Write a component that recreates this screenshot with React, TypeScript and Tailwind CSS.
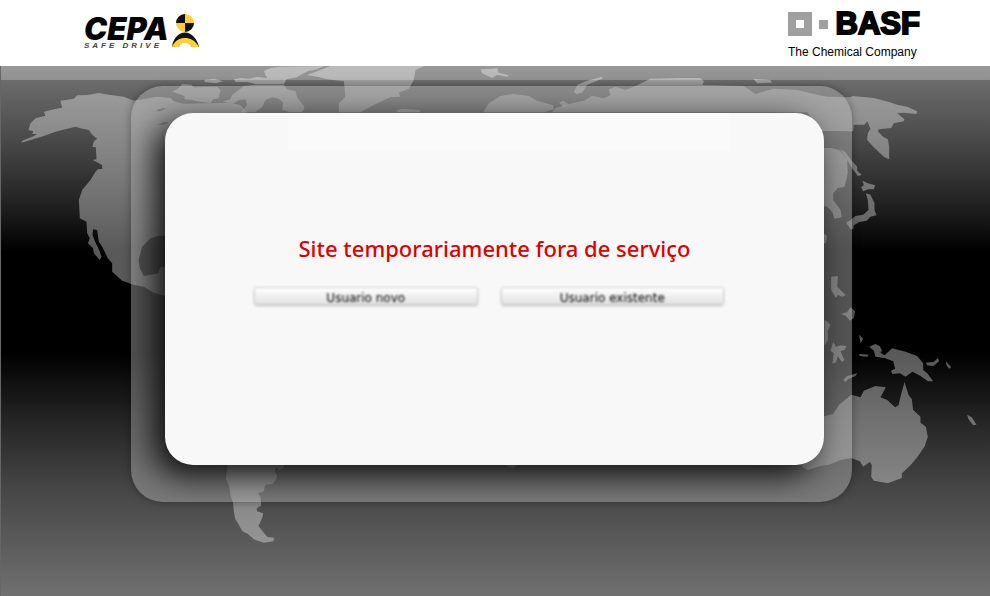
function WorldMap() {
  return (
    <svg
      className="absolute inset-0 h-full w-full"
      viewBox="0 66 990 530"
      preserveAspectRatio="xMidYMin slice"
      aria-hidden="true"
    >
      <g fill="#ffffff" fillOpacity="0.35">
        {/* North America */}
        <path
          transform="translate(0 60) scale(0.33333)"
          fillRule="evenodd"
          d="M62 248L66 242L100 228L110 222L95 222L98 214L84 210L90 190L105 175L135 167L130 155L160 148L185 143L180 122L220 116L230 106L260 105L295 99L330 105L370 110L400 122L430 117L470 110L510 114L520 124L550 131L630 130L690 128L720 135L740 157L740 400L495 620L480 620L474 640L430 648L418 625L414 600L425 560L450 535L475 527L540 527L540 720L495 708L460 698L430 680L400 675L365 662L335 635L335 610L322 595L305 560L295 545L290 510L278 508L276 525L284 545L296 570L303 590L298 600L280 580L278 565L262 550L268 535L260 520L258 485L238 475L235 420L245 390L270 360L285 335L292 328L306 326L304 314L284 304L276 300L288 298L286 262L276 260L280 244L290 236L276 225L265 210L240 205L225 200L185 210L165 215L130 228L90 240ZM465 153L485 144L497 146L478 154ZM472 195L490 186L505 187L490 194Z"
        />
        {/* Arctic islands */}
        <path
          transform="translate(0 60) scale(0.33333)"
          d="M515 95L535 84L545 72L572 74L580 82L650 80L660 90L655 115L638 118L630 130L590 124L575 120L552 118L552 108L530 100ZM612 60L640 56L668 64L645 70L612 66ZM665 125L690 118L695 104L715 90L730 78L770 74L850 74L860 88L885 94L890 112L912 140L905 154L862 154L850 130L835 116L815 112L795 120L785 140L765 157L720 157L740 135L735 118L715 120L700 130ZM700 58L720 54L745 56L770 50L800 55L790 34L810 24L840 20L970 18L950 28L925 32L905 42L890 52L858 58L850 72L765 72L740 66L705 66ZM920 45L960 30L990 18L1272 18L1245 30L1240 60L1225 86L1195 98L1200 110L1170 112L1130 130L1080 157L1015 157L1015 130L1035 110L1030 64L980 58L950 50ZM845 150L850 120L880 112L912 145L905 156L870 157Z"
        />
        <path
          transform="translate(320 60) scale(0.33333)"
          d="M225 152L245 146L298 150L300 157L235 157ZM480 28L515 26L530 24L535 38L565 46L560 50L530 44L515 54L485 40ZM490 152L505 130L540 108L580 102L625 108L650 122L698 136L700 148L670 157L490 157ZM760 96L770 75L800 62L845 50L845 56L800 74L785 98L768 102ZM716 128L728 122L744 132L730 142Z"
        />
        {/* Eurasia */}
        <path
          transform="translate(640 60) scale(0.33333)"
          d="M-265 157L-255 143L-200 128L-170 122L-145 108L-110 115L-90 106L-95 88L-75 80L-45 90L-10 76L30 56L110 54L180 54L190 64L186 75L310 78L345 102L400 86L470 90L530 104L560 110L630 112L636 108L700 114L745 126L770 134L800 140L830 154L828 162L790 158L770 160L792 178L790 184L760 190L752 204L715 208L712 214L728 230L742 238L746 260L746 298L730 290L700 262L680 240L682 220L690 206L680 184L672 194L640 194L638 214L560 213L535 213L500 157ZM338 56L390 60L394 68L350 70ZM540 264L575 264L600 272L620 300L622 340L612 380L592 384L578 400L578 420L600 450L604 472L582 476L575 455L560 440L540 436ZM600 268L614 276L630 298L650 320L650 332L664 345L652 348L636 326L620 300ZM666 362L682 370L704 376L700 388L684 388L668 394L662 382L670 376ZM676 400L690 404L702 430L702 450L708 466L690 470L678 482L656 486L640 496L638 508L630 508L617 488L630 480L645 468L668 464L684 450L682 420ZM550 520L560 528L556 550L550 550ZM572 650L592 648L590 680L616 706L604 710L592 704L586 714L572 690Z"
        />
        {/* South-east Asia and Oceania */}
        <path
          transform="translate(740 300) scale(0.33333)"
          d="M302 42L320 36L330 22L344 34L340 54L328 62L316 48ZM252 60L262 66L270 74L262 92L262 120L252 138ZM278 126L286 140L300 136L318 138L312 150L300 154L312 180L304 186L292 168L286 188L276 190L280 160L270 152ZM356 104L368 116L360 130ZM356 162L385 164L380 170L358 168ZM308 240L320 228L350 220L345 228L325 236L314 246ZM386 140L404 132L418 138L424 152L420 158L432 166L455 145L495 155L530 168L548 190L548 210L560 220L578 244L562 244L540 228L516 215L495 230L478 220L455 222L452 212L464 206L458 184L432 174L405 170L400 152ZM556 188L580 186L592 174L596 184L578 198L560 196ZM616 184L632 202L626 206L618 196ZM680 344L694 352L708 374L698 376L684 358ZM252 348L278 342L296 314L332 284L360 292L370 272L390 264L405 258L436 262L420 292L440 300L464 322L474 316L480 290L492 246L504 284L514 298L518 330L540 350L540 368L556 380L562 410L552 440L530 472L510 496L484 520L484 534L442 550L400 542L392 530L394 496L388 486L368 500L358 484L332 474L300 480L265 494L240 498L202 510L185 500L180 440Z"
        />
        {/* South America */}
        <path
          transform="translate(120 430) scale(0.33333)"
          d="M322 100L490 100L490 114L476 120L468 112L462 122L470 138L466 150L455 162L434 164L430 184L412 190L420 200L422 226L408 236L410 244L428 250L426 262L414 288L428 306L440 320L462 324L458 334L430 338L400 328L382 312L366 304L344 266L340 246L338 220L330 196L326 168L316 146ZM1155 105L1190 105L1180 114L1165 112Z"
        />
      </g>
    </svg>
  );
}

function CepaLogo() {
  return (
    <div className="flex items-start gap-0.5" role="img" aria-label="CEPA Safe Drive">
      <div className="w-[86px] pt-0.5 text-black">
        <div className="font-['Inter',sans-serif] text-[31px] leading-[25px] font-black italic">CEPA</div>
        <div className="mt-px font-['Liberation_Sans',sans-serif] text-[8px] leading-[8px] font-bold tracking-[3px] whitespace-nowrap text-[#444] italic">
          SAFE DRIVE
        </div>
      </div>
      <svg width="28" height="34" viewBox="0 0 28 34" aria-hidden="true">
        <circle cx="13" cy="9" r="9" fill="#fdd131" />
        <path d="M13 9V0A9 9 0 0 0 4 9ZM13 9V18A9 9 0 0 0 22 9Z" fill="#111" />
        <path d="M0 33C1 24 7 18.500 13 18.500S25 24 27 33H20Q13 22 6 33Z" fill="#111" />
        <path d="M0 33C3 26 8 24 13 24S23 26 27 33H20Q18 29 13 29T6 33Z" fill="#fdd131" />
      </svg>
    </div>
  );
}

function BasfLogo() {
  return (
    <div className="w-[132px] font-['Liberation_Sans',Arial,sans-serif] text-black">
      <div className="flex items-center justify-between">
        <div className="size-6 border-8 border-[#a0a0a0]" />
        <div className="size-[9px] bg-[#a0a0a0]" />
        <div className="text-[31px] leading-[28px] font-bold [-webkit-text-stroke:2px_black]">BASF</div>
      </div>
      <div className="mt-1.5 text-[12px] leading-[16px] whitespace-nowrap">The Chemical Company</div>
    </div>
  );
}

function BlurredButton({ label }: { label: string }) {
  return (
    <button
      type="button"
      className="h-[18px] flex-1 rounded-[3px] border border-[#d0d0d0] bg-linear-to-b from-white to-[#e2e2e2] pt-0.5 font-['DejaVu_Sans',Verdana,sans-serif] text-[12px] leading-[16px] text-black shadow-[0_1px_2px_#bbb] blur-[1px]"
    >
      {label}
    </button>
  );
}

export default function App() {
  return (
    <div className="flex min-h-screen flex-col bg-white">
      <header className="flex h-[66px] items-start justify-between pr-[70px] pl-[84px]">
        <div className="pt-[14px]">
          <CepaLogo />
        </div>
        <div className="pt-[10px]">
          <BasfLogo />
        </div>
      </header>
      <main className="relative flex-1 border-l border-[#666] bg-[linear-gradient(to_bottom,#767676_0%,#686868_4%,#434343_16%,#1e1e1e_27%,#000_35%,#000_54%,#222_66%,#444_79%,#707070_100%)] pt-5 pr-[138px] pb-[94px] pl-[130px]">
        <WorldMap />
        <div className="absolute inset-x-0 top-0 h-[14px] bg-white/25" />
        <section className="relative overflow-hidden rounded-[32px] bg-[rgba(176,176,176,0.47)] pt-[27px] pr-7 pb-[37px] pl-[34px] shadow-[0_0_8px_rgba(0,0,0,0.35)]">
          <div className="flex min-h-[352px] flex-col items-center rounded-[28px] bg-[#f8f8f8] shadow-[-10px_10px_32px_rgba(0,0,0,0.9)]">
            <div className="ml-7 h-[38px] w-[442px] max-w-full bg-[#fafafa]" />
            <h1 className="mt-[81px] font-['Noto_Sans',sans-serif] text-[22px] leading-[32px] font-medium text-[#e00000]">
              Site temporariamente fora de serviço
            </h1>
            <div className="mt-[23px] flex w-full gap-[23px] pr-[100px] pl-[89px]">
              <BlurredButton label="Usuario novo" />
              <BlurredButton label="Usuario existente" />
            </div>
          </div>
        </section>
      </main>
    </div>
  );
}
